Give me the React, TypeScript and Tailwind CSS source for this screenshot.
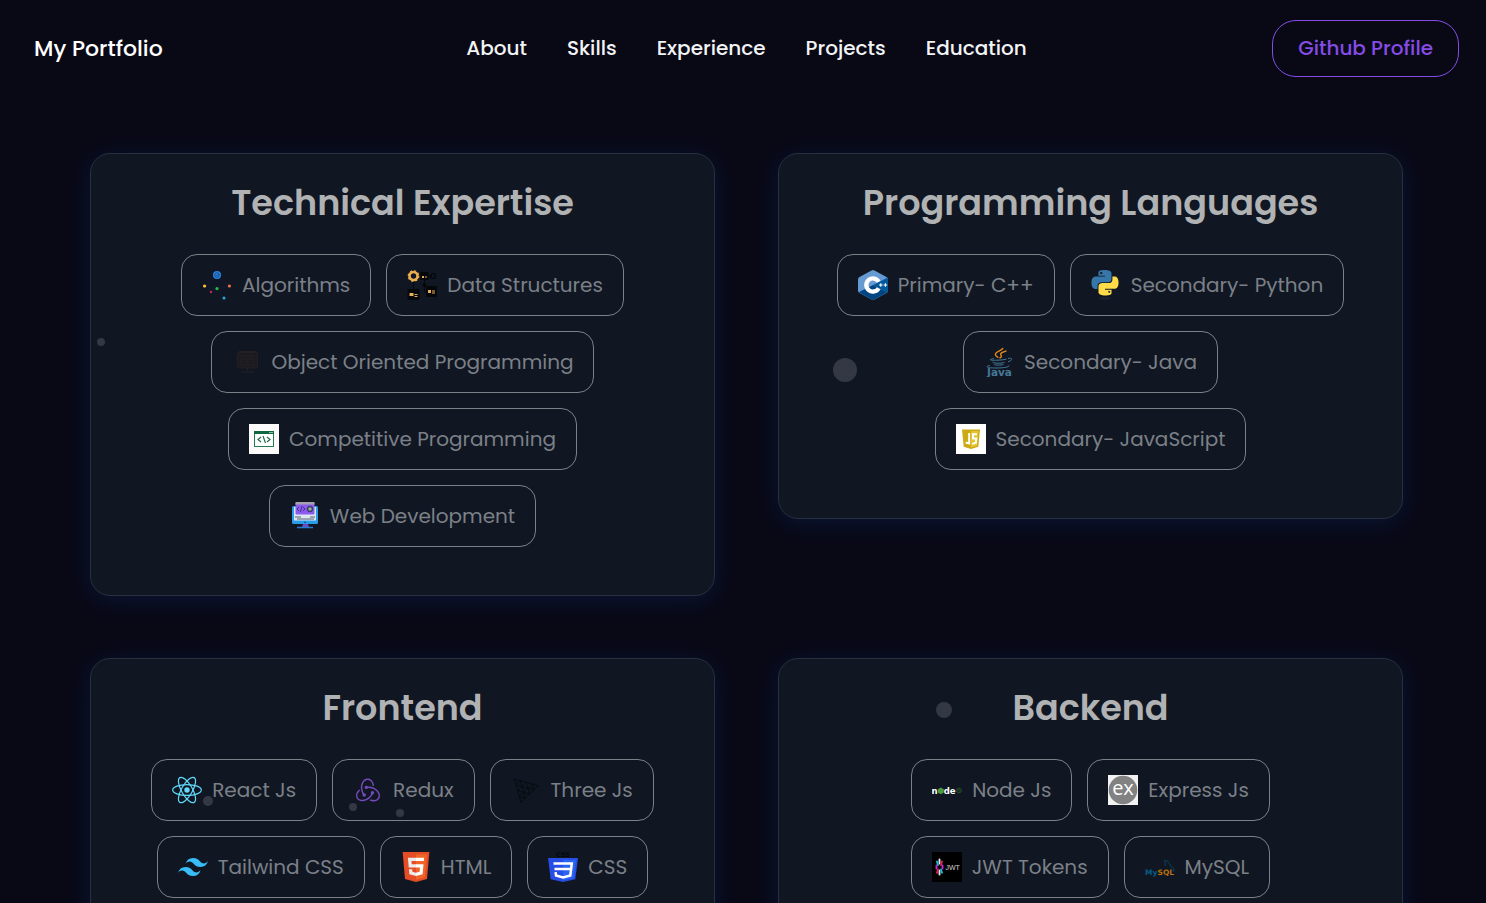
import type { ReactNode } from "react";
import { SiRedux, SiTailwindcss } from "react-icons/si";

const AlgorithmsIcon = () => (
  <svg viewBox="0 0 30 30" className="size-[30px] shrink-0" aria-hidden="true">
    <path d="M15 6 3 16l12 3L27 16 15 6l0 13 7 9M3 16l6 6 6-3" fill="none" stroke="#11193d" strokeWidth="0.8" />
    <circle cx="15" cy="5" r="4" fill="#2b83dc" />
    <circle cx="15" cy="5" r="2.3" fill="none" stroke="#0e3b80" strokeWidth="0.7" />
    <path d="m13.8 5 1 1 2-2" fill="none" stroke="#0e3b80" strokeWidth="0.7" />
    <circle cx="2.6" cy="16" r="1.6" fill="#ffc72b" />
    <circle cx="27.4" cy="16" r="1.6" fill="#f07142" />
    <circle cx="15" cy="18.6" r="1.6" fill="#27bd3c" />
    <circle cx="9" cy="22" r="1.2" fill="#c72c52" />
    <circle cx="22" cy="28" r="1.5" fill="#28a9e5" />
  </svg>
);

const DataIcon = () => (
  <svg viewBox="0 0 30 30" className="size-[30px] shrink-0" aria-hidden="true">
    <path d="M6.5 10v9M20 6h5M17.500 9v13h3" fill="none" stroke="#05070b" strokeWidth="1" />
    <circle cx="6.500" cy="6" r="4" fill="none" stroke="#eeb04e" strokeWidth="2.600" />
    <circle cx="6.500" cy="6" r="5.300" fill="none" stroke="#eeb04e" strokeWidth="1.200" strokeDasharray="2 2.160" />
    <g fill="#05070b">
      <rect x="13.500" y="2" width="8" height="8" rx="1" />
      <rect x="0.500" y="19" width="12" height="11" rx="1" />
      <rect x="19" y="16" width="11" height="11" rx="1" />
      <circle cx="17.500" cy="15" r="2" />
    </g>
    <circle cx="26" cy="6" r="2.500" fill="none" stroke="#05070b" strokeWidth="1.200" />
    <path d="m26 6 3-3" stroke="#05070b" strokeWidth="1" />
    <g fill="#e5ae57">
      <rect x="15" y="6" width="2" height="2" />
      <rect x="18" y="6.500" width="2" height="1" />
      <rect x="2.500" y="23" width="4" height="3" />
      <rect x="7.500" y="24" width="3" height="1" />
      <rect x="7.500" y="26" width="3" height="1" />
      <rect x="21" y="20" width="3" height="3" />
      <rect x="25" y="20.500" width="3" height="1" />
      <rect x="25" y="22.500" width="3" height="1" />
    </g>
  </svg>
);

const ObjectIcon = () => (
  <svg viewBox="0 0 30 30" className="size-[30px] shrink-0" aria-hidden="true">
    <g fill="none" stroke="#251f24" strokeWidth="1">
      <rect x="5.500" y="5.500" width="20" height="15.500" rx="1.500" fill="#1b1a21" />
      <path d="M7 4.500h17M8 9h15M8 12h15M8 18h15M15.500 21v3M9 25h13" />
      <path d="m10 13-2 2 2 2m11-4 2 2-2 2M13 15h5" />
    </g>
  </svg>
);

const CompetitiveIcon = () => (
  <svg viewBox="0 0 30 30" className="size-[30px] shrink-0" aria-hidden="true">
    <path d="M0 0h30v30H0z" fill="#fcfafa" />
    <rect x="5.500" y="7.500" width="19" height="15" fill="#fff" stroke="#23795a" />
    <path d="M5 7h20v3H5z" fill="#106640" />
    <path d="M20 8.500h4" stroke="#c3ded2" strokeWidth="0.700" />
    <path d="m12 13-3 2.500L12 18m6-5 3 2.500L18 18m-4-6 2.500 7" fill="none" stroke="#216b49" strokeWidth="1.200" />
  </svg>
);

const WebIcon = () => (
  <svg viewBox="0 0 30 30" className="size-[30px] shrink-0" aria-hidden="true">
    <rect x="2" y="5" width="26" height="18" rx="1.500" fill="#299be7" />
    <path d="M4 6h22v13.500H4z" fill="#dce6f0" />
    <path d="M5 16h6m9 0h5M7 18h17" stroke="#4a5267" strokeWidth="0.900" />
    <path d="M13 23h5l1 3h-7z" fill="#6d49c7" />
    <path d="M7 26.500h16" stroke="#257ccb" strokeWidth="1.500" />
    <rect x="5.500" y="1" width="19" height="12.500" rx="1" fill="#8b5bf0" />
    <path d="M5.500 3.500V2q0-1 1-1h17q1 0 1 1v1.500z" fill="#a6a2ad" />
    <path d="m9 6-2 2 2 2m4-4 2 2-2 2m-1-5-1.500 6" fill="none" stroke="#392675" strokeWidth="0.800" />
    <circle cx="20" cy="8" r="2.800" fill="#536675" stroke="#292e52" strokeWidth="0.800" />
    <path d="M20 6.500v3m-1.500-1.500h3" stroke="#c7d8a7" strokeWidth="0.800" />
    <circle cx="15" cy="21.300" r="0.900" fill="#244b91" />
  </svg>
);

const CppIcon = () => (
  <svg viewBox="0 0 30 30" className="size-[30px] shrink-0" aria-hidden="true">
    <path d="M13.500.5q1.500-.8 3 0l12 6.600q1.500.8 1.500 2.400v11q0 1.600-1.500 2.400l-12 6.600q-1.500.8-3 0l-12-6.600Q0 22.100 0 20.500v-11Q0 7.900 1.500 7.100z" fill="#659ad2" />
    <path d="M29.300 7.700q.7.800.7 1.800v11q0 1.100-.7 1.800L15 15z" fill="#00599c" />
    <path d="m15 15 14.300 7.300-12.800 7.200q-1.500.8-3 0L.7 22.300z" fill="#004482" />
    <path d="M20.700 18.200a6.600 6.600 0 1 1 0-6.400" fill="none" stroke="#fff" strokeWidth="4.300" />
    <path d="M21 15h3.600m-1.800-1.800v3.600M25.600 15h3.600m-1.800-1.800v3.600" stroke="#fff" strokeWidth="1.100" />
  </svg>
);

const PythonIcon = () => (
  <svg viewBox="0 0 30 30" className="size-[30px] shrink-0" aria-hidden="true">
    <ellipse cx="14" cy="28.500" rx="6" ry="1" fill="#1c2735" />
    <g transform="translate(0.500 0) scale(1.120 1.060)">
      <path
        fill="#3776a9"
        d="M14.250.18l.9.2.73.26.59.3.45.32.34.34.25.34.16.33.1.3.04.26.02.2-.01.13V8.500l-.05.63-.13.55-.21.46-.26.38-.3.31-.33.25-.35.19-.35.14-.33.1-.3.07-.26.04-.21.02H8.770l-.69.05-.59.14-.5.22-.41.27-.33.32-.27.35-.2.36-.15.37-.1.35-.07.32-.04.27-.02.21v3.060H3.170l-.21-.03-.28-.07-.32-.12-.35-.18-.36-.26-.36-.36-.35-.46-.32-.59-.28-.73-.21-.88-.14-1.050-.05-1.230.06-1.220.16-1.040.24-.87.32-.71.36-.57.4-.44.42-.33.42-.24.4-.16.36-.1.32-.05.24-.01h.16l.06.01h8.160v-.83H6.180l-.01-2.750-.02-.37.05-.34.11-.31.17-.28.25-.26.31-.23.38-.2.44-.18.51-.15.58-.12.64-.1.71-.06.77-.04.84-.02 1.270.05zm-6.300 1.980l-.23.33-.08.41.08.41.23.34.33.22.41.09.41-.09.33-.22.23-.34.08-.41-.08-.41-.23-.33-.33-.22-.41-.09-.41.09z"
      />
      <path
        fill="#ffdc48"
        d="M21.100 6.110l.28.06.32.12.35.18.36.27.36.35.35.47.32.59.28.73.21.88.14 1.040.05 1.230-.06 1.230-.16 1.040-.24.86-.32.71-.36.57-.4.45-.42.33-.42.24-.4.16-.36.09-.32.05-.24.02-.16-.01h-8.220v.82h5.840l.01 2.760.02.36-.05.34-.11.31-.17.29-.25.25-.31.24-.38.2-.44.17-.51.15-.58.13-.64.09-.71.07-.77.04-.84.01-1.270-.04-1.070-.14-.9-.2-.73-.25-.59-.3-.45-.33-.34-.34-.25-.34-.16-.33-.1-.3-.04-.25-.02-.2.01-.13v-5.340l.05-.64.13-.54.21-.46.26-.38.3-.32.33-.24.35-.2.35-.14.33-.1.3-.06.26-.04.21-.02.13-.01h5.840l.69-.05.59-.14.5-.21.41-.28.33-.32.27-.35.2-.36.15-.36.1-.35.07-.32.04-.28.02-.21V6.070h2.090l.14.01z"
      />
      <circle cx="15.800" cy="20.600" r="1" fill="#3b3b35" />
    </g>
  </svg>
);

const JavaIcon = () => (
  <svg viewBox="0 0 30 30" className="size-[30px] shrink-0" aria-hidden="true">
    <path d="M19 1c-1 3-9 4-7.500 7 .6 1.200 1.800 1.800 2.700 2.800M22.500 3.800c-3.500 1-7 2.400-5.500 4.400 1 1.200 0 2-1.500 3" fill="none" stroke="#e68a1d" strokeWidth="1.400" />
    <g fill="none" stroke="#467799" strokeWidth="1">
      <path d="M10 11.500c-6 1.200-4.500 2 3 1.700 4-.1 8-.6 9.500-1.200M24 11.500c5-1.200 5 2 0 3.300M8.500 15c.5 1.700 10 1.500 12 .3M10 17.200c.5 1.300 7.500 1.100 9.500.2M6 18.500c-6 1.200-2.500 2.500 6 2.500 8 0 13.500-1 13-2.500" />
    </g>
    <text x="15.500" y="28.500" textAnchor="middle" fill="#467799" fontFamily="DejaVu Sans, sans-serif" fontSize="10.500" fontWeight="700">Java</text>
  </svg>
);

const JavaScriptIcon = () => (
  <svg viewBox="0 0 30 30" className="size-[30px] shrink-0" aria-hidden="true">
    <path d="M0 0h30v30H0z" fill="#fff" />
    <path d="M6 5.500h18l-1.700 17.300L15 25l-7.300-2.200z" fill="#cda914" />
    <path d="M15 7h7.500l-1.500 14.700-6 1.800z" fill="#e7c52d" />
    <path d="M13.200 9v10.500l-3.500-1M21 10.300h-4v4.200h3.300l-.4 4.200-3.700 1.200" fill="none" stroke="#fff" strokeWidth="2" />
  </svg>
);

const ReactIcon = () => (
  <svg viewBox="0 0 30 30" className="size-[30px] shrink-0" aria-hidden="true">
    <circle cx="15" cy="15" r="2.700" fill="#61dafb" />
    <g fill="none" stroke="#61dafb" strokeWidth="1.200">
      <ellipse cx="15" cy="15" rx="14.300" ry="5.400" />
      <ellipse cx="15" cy="15" rx="14.300" ry="5.400" transform="rotate(60 15 15)" />
      <ellipse cx="15" cy="15" rx="14.300" ry="5.400" transform="rotate(120 15 15)" />
    </g>
  </svg>
);

const ReduxIcon = () => (
  <span className="flex size-[30px] shrink-0 items-center justify-center text-[#764abc]">
    <SiRedux size={24} aria-hidden="true" />
  </span>
);

// Point of a triangular lattice with four steps along each side.
const lattice = (i: number, j: number) =>
  `${3.5 + (23.5 * i + 6.5 * j) / 4} ${4 + (6.5 * i + 23.5 * j) / 4}`;

const latticePath = [0, 1, 2, 3, 4]
  .map(
    (k) =>
      `M${lattice(k, 0)}L${lattice(0, k)}M${lattice(k, 0)}L${lattice(k, 4 - k)}M${lattice(0, k)}L${lattice(4 - k, k)}`,
  )
  .join("");

const ThreeIcon = () => (
  <svg viewBox="0 0 30 30" className="size-[30px] shrink-0" aria-hidden="true">
    <path d={latticePath} fill="none" stroke="#070a10" strokeWidth="0.9" strokeLinejoin="round" strokeLinecap="round" />
  </svg>
);

const TailwindIcon = () => <SiTailwindcss size={30} color="#38bdf8" className="shrink-0" aria-hidden="true" />;

const HtmlIcon = () => (
  <svg viewBox="0 0 128 128" className="size-[30px] shrink-0" aria-hidden="true">
    <path fill="#e44d26" d="M17 115 7 0h114l-10 115-47 13z" />
    <path fill="#f16529" d="m64 118 37.500-10.500L110.500 10H64z" />
    <path fill="#ebebeb" d="M64 52.455H45.788L44.530 38.361H64V24.599H29.489l.33 3.692 3.382 37.927H64zm0 35.743l-.061.017-15.327-4.140-.979-10.975H33.816l1.928 21.609 28.193 7.826.063-.017z" />
    <path fill="#fff" d="M63.952 52.455v13.763h16.947l-1.597 17.849-15.350 4.143v14.319l28.215-7.820.207-2.325 3.234-36.233.335-3.696h-3.708zm0-27.856v13.762h33.244l.276-3.092.628-6.978.329-3.692z" />
  </svg>
);

const CssIcon = () => (
  <svg viewBox="0 0 30 30" className="size-[30px] shrink-0" aria-hidden="true">
    <text x="15" y="4.500" textAnchor="middle" fill="#04060a" fontFamily="DejaVu Sans, sans-serif" fontSize="6.500" fontWeight="700">CSS</text>
    <path d="M0 6h30l-2.700 21.300L15 30 2.700 27.300z" fill="#264de4" />
    <path d="M15 7.700h13L25.600 26 15 28.300z" fill="#2965f1" />
    <path d="M5.500 11.500h18.300l-1.500 12-7.300 2-7-2-.4-3.300M6.500 17h16.300" fill="none" stroke="#fff" strokeWidth="2.500" />
  </svg>
);

const NodeIcon = () => (
  <svg viewBox="0 0 30 30" className="size-[30px] shrink-0" aria-hidden="true">
    <g fontFamily="DejaVu Sans, sans-serif" fontSize="8.500" fontWeight="700" fill="#fff">
      <text x="-0.500" y="18.500">n</text>
      <text x="11.700" y="18.500">d</text>
      <text x="17.700" y="18.500">e</text>
    </g>
    <path d="m8.800 12.500 3 1.700v3.400l-3 1.700-3-1.700v-3.400z" fill="#4b9b3f" />
    <path d="m27 13 2.200 1.200v2.600L27 18l-2.200-1.200v-2.600zm-1.500 2h3m-2 2h2" fill="none" stroke="#28532b" strokeWidth="0.900" />
  </svg>
);

const ExpressIcon = () => (
  <svg viewBox="0 0 30 30" className="size-[30px] shrink-0" aria-hidden="true">
    <path d="M0 0h30v30H0z" fill="#f2f2f2" />
    <circle cx="15" cy="15" r="14.300" fill="#828282" />
    <text x="15" y="20" textAnchor="middle" fill="#fff" fontFamily="Open Sans, sans-serif" fontSize="20">ex</text>
  </svg>
);

const JwtIcon = () => (
  <svg viewBox="0 0 30 30" className="size-[30px] shrink-0" aria-hidden="true">
    <path d="M0 0h30v30H0z" fill="#000" />
    <g strokeWidth="1.900" strokeLinecap="round">
      <path d="M7.500 7.500v4m0 7v4" stroke="#e7e7e7" />
      <path d="m5 9.500 1 3.500m3 4.500 1 3.300" stroke="#19b9d7" />
      <path d="m10 9.500-1 3.500M6 17.500l-1 3.300" stroke="#e0204e" />
      <path d="M4.500 13.500v3m6-3v3" stroke="#c42bd0" />
    </g>
    <text x="13.500" y="17.800" fill="#d4d4d4" fontFamily="Liberation Sans, sans-serif" fontSize="7">JWT</text>
  </svg>
);

const MySqlIcon = () => (
  <svg viewBox="0 0 30 30" className="size-[30px] shrink-0" aria-hidden="true">
    <g fontFamily="DejaVu Sans, sans-serif" fontSize="7.500" fontWeight="700">
      <text x="0" y="22.500" fill="#075c86">My</text>
      <text x="12.500" y="22.500" fill="#ba720d">SQL</text>
    </g>
    <path d="M20.500 14c-1-2 0-3-.5-4-.7-1.500-.5-2 1-1.500 3.500 1 4 5 6 7l2.500 2.500-2 .2 1.500 1.500" fill="none" stroke="#084b6b" strokeWidth="0.900" />
  </svg>
);

const links = ["About", "Skills", "Experience", "Projects", "Education"];

type Skill = { name: string; icon: ReactNode };

const groups: { title: string; skills: Skill[] }[] = [
  {
    title: "Technical Expertise",
    skills: [
      { name: "Algorithms", icon: <AlgorithmsIcon /> },
      { name: "Data Structures", icon: <DataIcon /> },
      { name: "Object Oriented Programming", icon: <ObjectIcon /> },
      { name: "Competitive Programming", icon: <CompetitiveIcon /> },
      { name: "Web Development", icon: <WebIcon /> },
    ],
  },
  {
    title: "Programming Languages",
    skills: [
      { name: "Primary- C++", icon: <CppIcon /> },
      { name: "Secondary- Python", icon: <PythonIcon /> },
      { name: "Secondary- Java", icon: <JavaIcon /> },
      { name: "Secondary- JavaScript", icon: <JavaScriptIcon /> },
    ],
  },
  {
    title: "Frontend",
    skills: [
      { name: "React Js", icon: <ReactIcon /> },
      { name: "Redux", icon: <ReduxIcon /> },
      { name: "Three Js", icon: <ThreeIcon /> },
      { name: "Tailwind CSS", icon: <TailwindIcon /> },
      { name: "HTML", icon: <HtmlIcon /> },
      { name: "CSS", icon: <CssIcon /> },
    ],
  },
  {
    title: "Backend",
    skills: [
      { name: "Node Js", icon: <NodeIcon /> },
      { name: "Express Js", icon: <ExpressIcon /> },
      { name: "JWT Tokens", icon: <JwtIcon /> },
      { name: "MySQL", icon: <MySqlIcon /> },
    ],
  },
];

function SkillCard({ title, skills }: { title: string; skills: Skill[] }) {
  return (
    <section className="rounded-[20px] border border-[#27303e] bg-[#101723] px-9 pt-[18px] pb-12 shadow-[0_4px_24px_rgba(23,92,230,0.15)]">
      <h2 className="mb-5 py-1 text-center text-[35px] leading-[54px] font-semibold text-[#b1b2b3]">{title}</h2>
      <ul className="flex flex-wrap justify-center gap-[15px]">
        {skills.map((skill) => (
          <li
            key={skill.name}
            className="flex items-center gap-2.5 rounded-2xl border border-[#7c8087] px-5 py-[15px] text-[20px] leading-[30px] whitespace-nowrap text-[#7c8087]"
          >
            {skill.icon}
            {skill.name}
          </li>
        ))}
      </ul>
    </section>
  );
}

export default function App() {
  return (
    <div className="relative h-screen overflow-hidden bg-[#090916] font-[Poppins,Inter,sans-serif]">
      <header className="grid grid-cols-[1fr_auto_1fr] items-center py-5 pr-[27px] pl-[34px] font-medium text-white">
        <a href="#home" className="justify-self-start text-[22px] leading-8">
          My Portfolio
        </a>
        <nav className="flex gap-10 text-[20px] leading-[31px] text-[#f2f3f4]">
          {links.map((link) => (
            <a key={link} href={`#${link.toLowerCase()}`}>
              {link}
            </a>
          ))}
        </nav>
        <a
          href="#github"
          className="justify-self-end rounded-3xl border border-[#854ce6] px-[25px] py-3 text-[20px] leading-[31px] text-[#854ce6]"
        >
          Github Profile
        </a>
      </header>

      <main className="grid grid-cols-2 items-start gap-x-[63px] gap-y-[62px] pt-14 pr-[83px] pb-16 pl-[90px]">
        {groups.map((group) => (
          <SkillCard key={group.title} title={group.title} skills={group.skills} />
        ))}
      </main>

      <div aria-hidden="true" className="pointer-events-none">
        <span className="absolute top-[338px] left-[97px] size-2 rounded-full bg-[#343845]" />
        <span className="absolute top-[358px] left-[833px] size-6 rounded-full bg-[#343845]" />
        <span className="absolute top-[702px] left-[936px] size-4 rounded-full bg-[#343845]" />
        <span className="absolute top-[796px] left-[203px] size-2.5 rounded-full bg-[#343845]" />
        <span className="absolute top-[803px] left-[349px] size-2 rounded-full bg-[#343845]" />
        <span className="absolute top-[809px] left-[396px] size-2 rounded-full bg-[#343845]" />
      </div>
    </div>
  );
}
